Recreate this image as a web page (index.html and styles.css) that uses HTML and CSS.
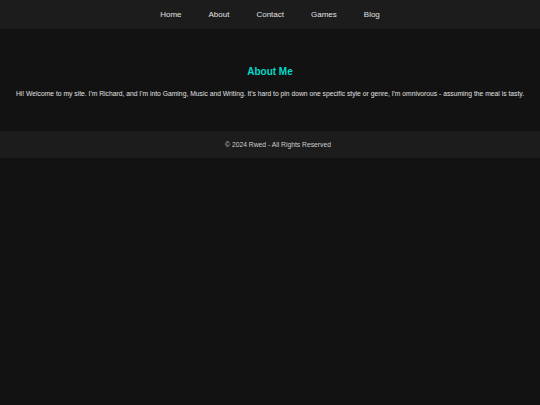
FILE: index.html
```html
<!DOCTYPE html>
<html lang="en">
<head>
<meta charset="utf-8">
<title>Rwed</title>
<link rel="stylesheet" href="styles.css">
</head>
<body>
<header class="site-header">
  <nav class="nav">
    <a class="nav-link" href="#">Home</a>
    <a class="nav-link" href="#">About</a>
    <a class="nav-link" href="#">Contact</a>
    <a class="nav-link" href="#">Games</a>
    <a class="nav-link" href="#">Blog</a>
  </nav>
</header>
<main class="about">
  <h1 class="about-title">About Me</h1>
  <p class="about-text">Hi! Welcome to my site. I'm Richard, and I'm into Gaming, Music and Writing. It's hard to pin down one specific style or genre, I'm omnivorous - assuming the meal is tasty.</p>
</main>
<footer class="site-footer">
  <p class="footer-text">&copy; 2024 Rwed - All Rights Reserved</p>
</footer>
</body>
</html>
```

FILE: styles.css
```css
html, body {
  margin: 0;
  padding: 0;
  background: #121212;
  color: #e0e0e0;
  font-family: "Liberation Sans", Arial, sans-serif;
}
.site-header {
  background: #1c1c1c;
  height: 29px;
  display: flex;
  align-items: center;
  justify-content: center;
}
.nav {
  display: flex;
  gap: 27px;
}
.nav-link {
  color: #e0e0e0;
  text-decoration: none;
  font-size: 8px;
}
.about {
  padding: 37px 0 34px;
  text-align: center;
}
.about-title {
  margin: 0;
  color: #03dac6;
  font-size: 10px;
  font-weight: bold;
}
.about-text {
  margin: 13px 0 0;
  font-size: 6.75px;
  color: #e0e0e0;
}
.site-footer {
  background: #1c1c1c;
  height: 27px;
  padding-left: 16px;
  display: flex;
  align-items: center;
  justify-content: center;
}
.footer-text {
  margin: 0;
  font-size: 6.75px;
  color: #cccccc;
}
```
